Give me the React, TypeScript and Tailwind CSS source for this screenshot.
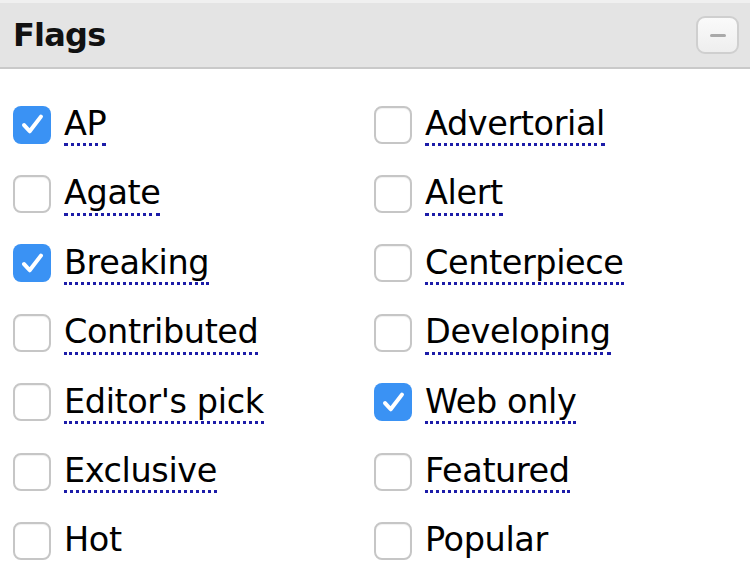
import { useState } from "react";

type Flag = { label: string; checked: boolean; underline: boolean };

const FLAGS: Flag[] = [
  { label: "AP", checked: true, underline: true },
  { label: "Advertorial", checked: false, underline: true },
  { label: "Agate", checked: false, underline: true },
  { label: "Alert", checked: false, underline: true },
  { label: "Breaking", checked: true, underline: true },
  { label: "Centerpiece", checked: false, underline: true },
  { label: "Contributed", checked: false, underline: true },
  { label: "Developing", checked: false, underline: true },
  { label: "Editor's pick", checked: false, underline: true },
  { label: "Web only", checked: true, underline: true },
  { label: "Exclusive", checked: false, underline: true },
  { label: "Featured", checked: false, underline: true },
  { label: "Hot", checked: false, underline: false },
  { label: "Popular", checked: false, underline: false },
];

function Checkbox({ checked }: { checked: boolean }) {
  if (checked) {
    return (
      <span className="flex h-[38px] w-[38px] shrink-0 items-center justify-center rounded-[8px] bg-[#3a92f4]">
        <svg width="27" height="27" viewBox="0 0 24 24" fill="none">
          <path
            d="M4.5 12.5l5 5.5L19.5 5"
            stroke="white"
            strokeWidth="3.6"
            strokeLinecap="round"
            strokeLinejoin="round"
          />
        </svg>
      </span>
    );
  }
  return (
    <span className="h-[38px] w-[38px] shrink-0 rounded-[8px] border-2 border-[#c6c6c6] bg-white shadow-[inset_0_1px_1px_rgba(0,0,0,0.06)]" />
  );
}

export default function App() {
  const [flags, setFlags] = useState(FLAGS);

  const toggle = (index: number) => {
    setFlags((prev) =>
      prev.map((flag, i) =>
        i === index ? { ...flag, checked: !flag.checked } : flag,
      ),
    );
  };

  return (
    <div className="h-[579px] w-[750px] overflow-hidden bg-white font-['DejaVu_Sans',Verdana,sans-serif] text-black">
      <div className="flex h-[69px] items-center justify-between border-t-[3px] border-b-2 border-t-[#f0f0f0] border-b-[#c9c9c9] bg-[#e4e4e4] pl-[13px] pr-[11px]">
        <h2 className="text-[32px] leading-none font-bold tracking-[-0.8px] text-[#111]">
          Flags
        </h2>
        <button className="flex h-[38px] w-[43px] items-center justify-center rounded-[9px] border-2 border-[#cfcfcf] bg-gradient-to-b from-[#fafafa] to-[#eeeeee]">
          <span className="h-[3px] w-[16px] rounded-full bg-[#a9a9a9]" />
        </button>
      </div>

      <div className="grid grid-cols-[361px_1fr] pt-[21px] pl-[13px]">
        {flags.map((flag, index) => (
          <label
            key={flag.label}
            onClick={() => toggle(index)}
            className="flex h-[69.4px] cursor-pointer items-center gap-[13px]"
          >
            <Checkbox checked={flag.checked} />
            <span
              className={`pt-[4px] text-[33.5px] leading-none tracking-[-0.4px] ${
                flag.underline
                  ? "border-b-[3px] border-dotted border-[#1c1ca8] pb-[3px]"
                  : "pb-[6px]"
              }`}
            >
              {flag.label}
            </span>
          </label>
        ))}
      </div>
    </div>
  );
}
